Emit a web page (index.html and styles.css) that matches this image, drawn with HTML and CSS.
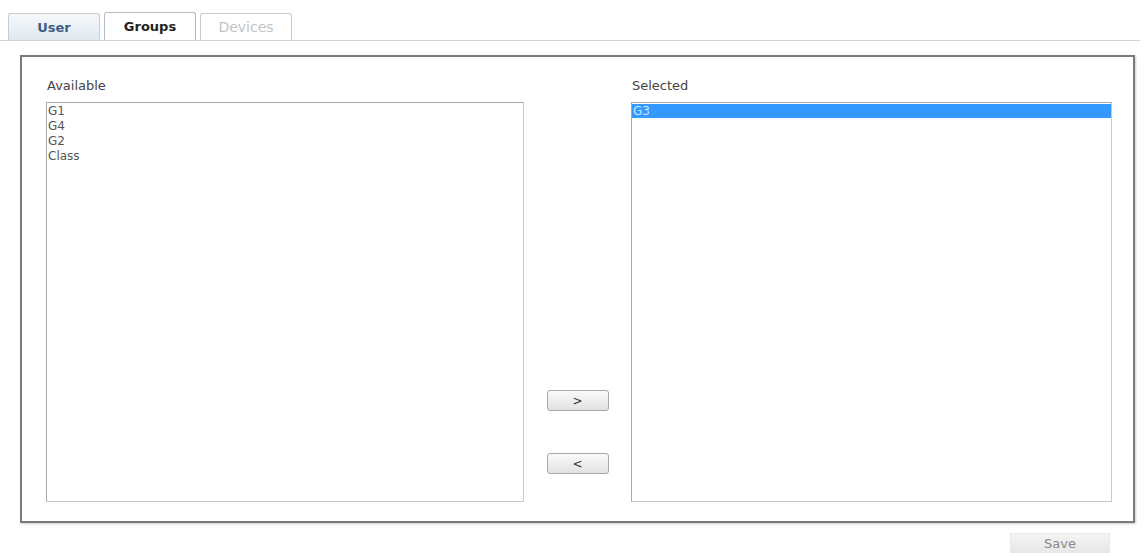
FILE: index.html
```html
<!DOCTYPE html>
<html>
<head>
    <title>Groups</title>
    <meta name="viewport" content="width=device-width, initial-scale=1">
    <link rel="stylesheet" href="styles.css">
</head>
<body>
    <div class="tabs">
        <div class="tab tab-user">User</div>
        <div class="tab tab-active">Groups</div>
        <div class="tab tab-disabled">Devices</div>
    </div>

    <div class="panel">
        <div class="column">
            <div class="label">Available</div>
            <div class="list list-left">
                <div class="item">G1</div>
                <div class="item">G4</div>
                <div class="item">G2</div>
                <div class="item">Class</div>
            </div>
        </div>

        <div class="mover">
            <button class="move-button">&gt;</button>
            <button class="move-button">&lt;</button>
        </div>

        <div class="column">
            <div class="label">Selected</div>
            <div class="list list-right">
                <div class="item item-selected">G3</div>
            </div>
        </div>
    </div>

    <div class="footer">
        <button class="save-button">Save</button>
    </div>
</body>
</html>
```
FILE: styles.css
```css
body {
    font-family: "DejaVu Sans", Verdana, sans-serif;
    background-color: #fff;
    margin: 0;
    padding: 0;
    color: #333;
}

.tabs {
    display: flex;
    gap: 4px;
    padding: 13px 0 0 8px;
    width: 1140px;
    border-bottom: 1px solid #d0d4d8;
    box-sizing: border-box;
    height: 41px;
}

.tab {
    width: 92px;
    height: 27px;
    box-sizing: border-box;
    border: 1px solid #c8ccd0;
    border-bottom: none;
    border-radius: 3px 3px 0 0;
    text-align: center;
    font-size: 13px;
    line-height: 27px;
    background-color: #fff;
}

.tab-user {
    background: linear-gradient(#f6f9fb, #dfe8ef);
    color: #3f5f85;
    font-weight: bold;
}

.tab-active {
    color: #222;
    font-weight: bold;
    height: 28px;
    margin-top: -1px;
    border-color: #b8bcc0;
}

.tab-disabled {
    color: #c0c4c8;
    font-size: 14px;
}

.panel {
    display: flex;
    margin: 14px 0 0 20px;
    width: 1115px;
    height: 468px;
    box-sizing: border-box;
    border: 2px solid #7a7a7a;
    box-shadow: 1px 1px 2px rgba(0, 0, 0, 0.2);
    padding: 20px 21px 19px 24px;
}

.column {
    display: flex;
    flex-direction: column;
}

.label {
    font-size: 13px;
    height: 25px;
    line-height: 17px;
    padding-left: 1px;
    color: #444;
}

.list {
    height: 401px;
    box-sizing: border-box;
    border: 1px solid #a8a8a8;
    border-right-color: #c8c8c8;
    border-bottom-color: #c8c8c8;
    padding-top: 1px;
}

.list-left {
    width: 478px;
}

.list-right {
    width: 481px;
}

.item {
    font-size: 12px;
    line-height: 15px;
    padding-left: 1px;
    color: #555;
}

.item-selected {
    background-color: #3399ff;
    color: #cfe6ff;
    height: 14px;
    line-height: 14px;
}

.mover {
    width: 107px;
    display: flex;
    flex-direction: column;
    align-items: center;
    justify-content: flex-end;
    gap: 42px;
    padding-bottom: 28px;
}

.move-button {
    width: 62px;
    height: 21px;
    border: 1px solid #a8a8a8;
    border-radius: 3px;
    background: linear-gradient(#fafafa, #e2e2e2);
    font-family: "DejaVu Sans", sans-serif;
    font-size: 12px;
    color: #333;
    padding: 0;
}

.footer {
    display: flex;
    justify-content: flex-end;
    width: 1110px;
    padding-top: 10px;
}

.save-button {
    width: 100px;
    height: 20px;
    border: 1px solid #e8e8e8;
    background: linear-gradient(#f4f4f4, #e8e8e8);
    font-family: "DejaVu Sans", sans-serif;
    font-size: 13px;
    color: #888;
    padding: 0;
}
```
